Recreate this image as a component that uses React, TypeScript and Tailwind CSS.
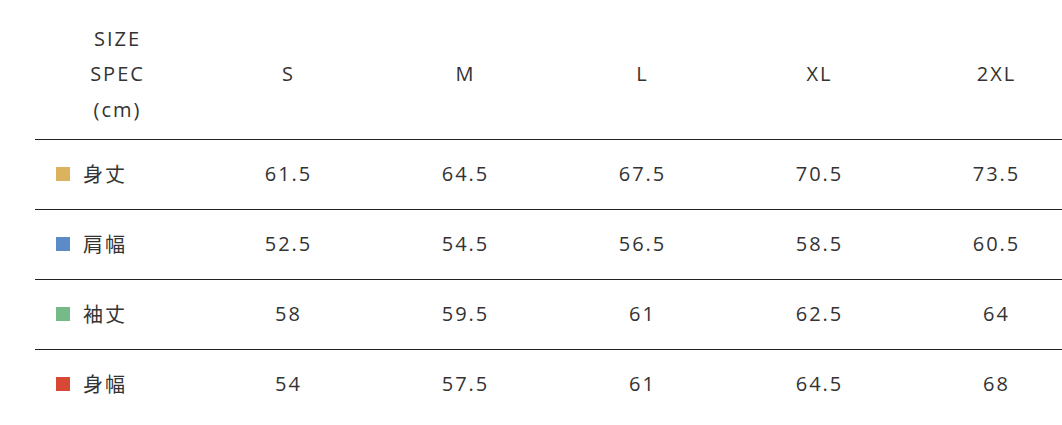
import React from "react";

const sizes = ["S", "M", "L", "XL", "2XL"];
const rows = [
  { label: "身丈", color: "bg-[#dbb35e]", values: ["61.5", "64.5", "67.5", "70.5", "73.5"] },
  { label: "肩幅", color: "bg-[#5b8cc8]", values: ["52.5", "54.5", "56.5", "58.5", "60.5"] },
  { label: "袖丈", color: "bg-[#76ba8a]", values: ["58", "59.5", "61", "62.5", "64"] },
  { label: "身幅", color: "bg-[#d94835]", values: ["54", "57.5", "61", "64.5", "68"] },
];

export default function App() {
  return (
    <div
      className="w-[1062px] h-[425px] overflow-hidden bg-white pl-[35px] text-[#333] text-[20px] tracking-[0.1em]"
      style={{ fontFamily: '"Open Sans", "Noto Sans CJK JP", sans-serif' }}
    >
      <table className="border-collapse w-[1050px] table-fixed">
        <colgroup>
          <col className="w-[165px]" />
          {sizes.map((s) => (
            <col key={s} className="w-[177px]" />
          ))}
        </colgroup>
        <thead>
          <tr className="h-[139px] border-b border-[#222]">
            <th className="font-normal text-center align-middle pt-[9px] leading-[35.5px]">
              <div>SIZE</div>
              <div>SPEC</div>
              <div>(cm)</div>
            </th>
            {sizes.map((s) => (
              <th key={s} className="font-normal text-center align-middle pt-[9px]">
                {s}
              </th>
            ))}
          </tr>
        </thead>
        <tbody>
          {rows.map((r, i) => (
            <tr key={r.label} className={`h-[70px] ${i < rows.length - 1 ? "border-b border-[#222]" : ""}`}>
              <td className="pl-[21px] align-middle">
                <div className="flex items-center gap-[13px]">
                  <span className={`w-[14px] h-[14px] ${r.color}`} />
                  <span style={{ fontFamily: '"Noto Sans CJK JP", sans-serif' }}>{r.label}</span>
                </div>
              </td>
              {r.values.map((v, j) => (
                <td key={j} className="text-center align-middle">
                  {v}
                </td>
              ))}
            </tr>
          ))}
        </tbody>
      </table>
    </div>
  );
}
